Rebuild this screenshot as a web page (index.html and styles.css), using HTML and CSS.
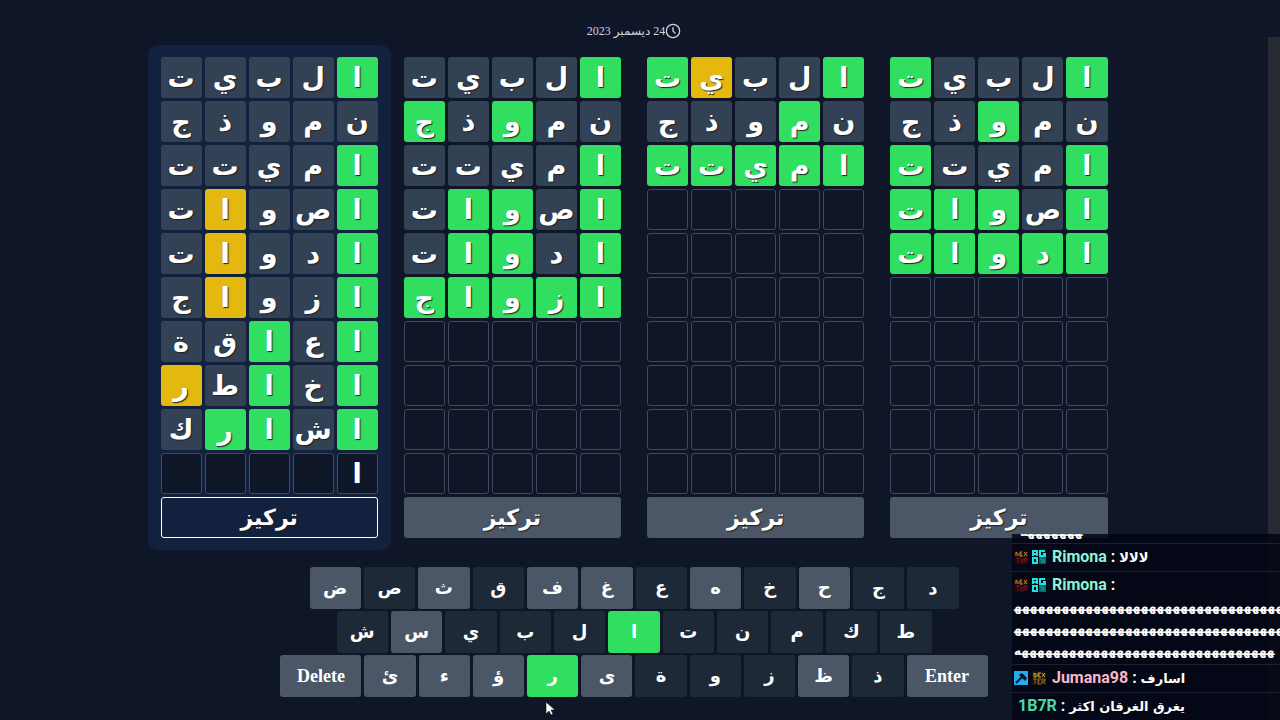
FILE: index.html
```html
<!DOCTYPE html>
<html lang="ar">
<head>
<meta charset="utf-8">
<meta name="viewport" content="width=device-width, initial-scale=1">
<title>24 ديسمبر 2023</title>
<link rel="stylesheet" href="styles.css">
</head>
<body>
<main class="game">
  <header class="date" dir="rtl">
    <svg class="clock" viewBox="0 0 24 24" fill="none" stroke="currentColor" stroke-width="2" stroke-linecap="round" stroke-linejoin="round" aria-hidden="true"><path d="M12 7v5l3 3M22 12a10 10 0 1 1-20 0 10 10 0 0 1 20 0z"/></svg>
    <time datetime="2023-12-24">24 ديسمبر 2023</time>
  </header>
  <section class="boards" id="boards"></section>
  <section class="keyboard" id="keyboard" dir="rtl"></section>
</main>
<div class="scrollbar"></div>
<aside class="chat">
  <p class="message clipped"><span class="laugh" dir="rtl">&zwj;هههههههه</span></p>
  <p class="message">
    <svg class="badge" viewBox="0 0 14 14" aria-hidden="true"><path fill="#160a10" d="M0 0h14v14H0z"/><path d="M2 6V2l2 2v2M6 2h2M6 2v4h3M6 4h2M10 2l3 4M13 2l-3 4" stroke="#c88a2c" fill="none"/><path d="M2 8h4M4 8v5M7 8v5h2M7 10h2M10 13V8h3v3h-2" stroke="#7c1418" fill="none"/></svg>
    <svg class="badge" viewBox="0 0 14 14" aria-hidden="true"><path fill="#066" d="M7 7h7v7H7z"/><path d="M1 6V1h4v5M1 4h4M13 1H8v5h5V4h-2M1 8h4v5H1z" stroke="#1be5e0" stroke-width="2" fill="none"/><path d="M8 9h2v4M12 9v4" stroke="#18a3a8" fill="none"/></svg>
    <b class="name mint">Rimona</b> <b>:</b> <span class="text" dir="rtl">لالالا</span>
  </p>
  <p class="message">
    <svg class="badge" viewBox="0 0 14 14" aria-hidden="true"><path fill="#160a10" d="M0 0h14v14H0z"/><path d="M2 6V2l2 2v2M6 2h2M6 2v4h3M6 4h2M10 2l3 4M13 2l-3 4" stroke="#c88a2c" fill="none"/><path d="M2 8h4M4 8v5M7 8v5h2M7 10h2M10 13V8h3v3h-2" stroke="#7c1418" fill="none"/></svg>
    <svg class="badge" viewBox="0 0 14 14" aria-hidden="true"><path fill="#066" d="M7 7h7v7H7z"/><path d="M1 6V1h4v5M1 4h4M13 1H8v5h5V4h-2M1 8h4v5H1z" stroke="#1be5e0" stroke-width="2" fill="none"/><path d="M8 9h2v4M12 9v4" stroke="#18a3a8" fill="none"/></svg>
    <b class="name mint">Rimona</b> <b>:</b>
    <span class="laugh" dir="rtl">هههههههههههههههههههههههههههههههههههههه&zwj;</span>
    <span class="laugh" dir="rtl">&zwj;هههههههههههههههههههههههههههههههههههههه&zwj;</span>
    <span class="laugh" dir="rtl">&zwj;ههههههههههههههههههههههههههههههههه</span>
  </p>
  <p class="message">
    <svg class="badge" viewBox="0 0 14 14" aria-hidden="true"><path fill="#20aef0" d="M0 0h14v14H0z"/><path d="M2 12l6-6" stroke="#0a1420" stroke-width="2"/><path fill="#0a1420" d="M5 4l3-2 5 5-2 3z"/></svg>
    <svg class="badge" viewBox="0 0 14 14" aria-hidden="true"><path fill="#14100c" d="M0 0h14v14H0z"/><path d="M2 2v4h2V3L2 2M9 2H6v4h3M6 4h2M10 2l3 4M13 2l-3 4" stroke="#d6b53c" fill="none"/><path d="M1 8h4M3 8v5M9 8H6v5h3M6 10h2M10 13V8h3v2h-2l2 3" stroke="#a66a28" fill="none"/></svg>
    <b class="name pink">Jumana98</b> <b>:</b> <span class="text" dir="rtl">اسارف</span>
  </p>
  <p class="message plain"><b class="name green">1B7R</b> <b>:</b> <span class="text" dir="rtl">يغرق الغرقان اكثر</span></p>
</aside>
<svg class="cursor" viewBox="0 0 12 18" aria-hidden="true"><path d="M1 1v12l3-3 2 4 2-1-2-4h4z" fill="#fff" stroke="#111" stroke-width=".6"/></svg>
<script src="app.js"></script>
</body>
</html>
```
FILE: styles.css
```css
* { box-sizing: border-box; }
body {
  margin: 0;
  min-height: 100vh;
  background: #0f1628;
  color: #fff;
  font-family: "Liberation Serif", "DejaVu Sans", serif;
  overflow: hidden;
}
.game {
  display: flex;
  flex-direction: column;
  align-items: center;
  margin-right: 12px;
  padding-top: 22px;
}
.date {
  display: flex;
  align-items: center;
  height: 18px;
  margin-bottom: 5px;
  color: #cbd5e1;
  font-size: 12px;
  line-height: 18px;
}
.clock { width: 16px; height: 16px; }
.boards {
  display: grid;
  grid-template-columns: repeat(4, 1fr);
  width: 100%;
  max-width: 973px;
}
.board {
  display: flex;
  flex-direction: column;
  gap: 3px;
  padding: 12px 13px;
  border-radius: 10px;
}
.board.active { background: #12213d; }
.row {
  display: grid;
  grid-template-columns: repeat(5, 1fr);
  gap: 3px;
}
.cell {
  display: flex;
  align-items: center;
  justify-content: center;
  height: 41px;
  border-radius: 3px;
  background: #334155;
  font: bold 27px/41px "DejaVu Sans", sans-serif;
  text-shadow: 1px 1px 1px #222;
}
.cell.empty { background: #0f1628; border: 1px solid #3f4b5c; }
.hit { background: #30df60; }
.near { background: #e4b80e; }
.focus {
  height: 41px;
  padding: 0;
  border: 0;
  border-radius: 3px;
  background: #4b5666;
  color: #fff;
  font: bold 22px/38px "DejaVu Sans", sans-serif;
  text-shadow: 1px 1px 1px #222;
}
.active .focus { background: transparent; border: 1px solid #fff; }
.keyboard {
  display: flex;
  flex-direction: column;
  gap: 2px;
  width: 100%;
  max-width: 707px;
  margin-top: 17px;
}
.keys { display: flex; gap: 3px; }
.keys.first { padding: 0 29px; }
.keys.second { padding: 0 56px; }
.key {
  flex: 1;
  height: 42px;
  padding: 0;
  border: 0;
  border-radius: 3px;
  background: #1e2938;
  color: #fff;
  font: bold 18px/40px "Liberation Serif", "DejaVu Sans", serif;
}
.key.wide { flex: 0 0 81px; }
.key.idle { background: #4b5666; }
.key.hit { background: #30df60; }
.scrollbar {
  position: absolute;
  top: 37px;
  right: 0;
  bottom: 0;
  width: 12px;
  background: #292b34;
}
.chat {
  position: absolute;
  right: 0;
  bottom: 0;
  width: 268px;
  background: rgba(2, 5, 18, .85);
  font: 16px/22px Roboto, "DejaVu Sans", sans-serif;
}
.message {
  margin: 0;
  padding: 2px 2px;
  border-bottom: 1px solid #1b2130;
}
.message:last-child { border-bottom: 0; }
.clipped { display: flex; align-items: flex-end; height: 10px; padding: 0 8px; overflow: hidden; }
.plain { padding-left: 6px; }
.badge { width: 14px; height: 14px; vertical-align: -2px; }
.name { margin-left: 2px; }
.plain .name { margin-left: 0; }
.mint { color: #8af5d5; }
.pink { color: #f5b8cc; }
.green { color: #4bd8a4; }
.text { font: bold 13px/22px "DejaVu Sans", sans-serif; }
.laugh { display: block; width: max-content; font: bold 12px/22px "DejaVu Sans", sans-serif; }
.cursor {
  position: absolute;
  left: 545px;
  top: 701px;
  width: 12px;
  height: 18px;
}
```
FILE: app.js
```javascript
// Marks: g = right place, y = wrong place, - = absent, . = typed but not submitted
const boards = [
  { active: true, rows: [["البيت", "g----"], ["نموذج", "-----"], ["اميتت", "g----"], ["اصوات", "g--y-"], ["ادوات", "g--y-"], ["ازواج", "g--y-"], ["اعاقة", "g-g--"], ["اخاطر", "g-g-y"], ["اشارك", "g-gg-"], ["ا", "."]] },
  { rows: [["البيت", "g----"], ["نموذج", "--g-g"], ["اميتت", "g----"], ["اصوات", "g-gg-"], ["ادوات", "g-gg-"], ["ازواج", "ggggg"]] },
  { rows: [["البيت", "g--yg"], ["نموذج", "-g---"], ["اميتت", "ggggg"]] },
  { rows: [["البيت", "g---g"], ["نموذج", "--g--"], ["اميتت", "g---g"], ["اصوات", "g-ggg"], ["ادوات", "ggggg"]] }
];
const markClass = { g: "hit", y: "near", "-": "miss", ".": "empty" };

function add(parent, tag, className, text = "") {
  const node = document.createElement(tag);
  node.className = className;
  node.textContent = text;
  parent.append(node);
  return node;
}

for (const data of boards) {
  const board = add(document.getElementById("boards"), "div", data.active ? "board active" : "board");
  board.dir = "rtl";
  for (let r = 0; r < 10; r++) {
    const [word, marks] = data.rows[r] || ["", ""];
    const row = add(board, "div", "row");
    for (let c = 0; c < 5; c++) add(row, "div", "cell " + (markClass[marks[c]] || "empty"), word[c] || "");
  }
  add(board, "button", "focus", "تركيز");
}

const idle = "حهغفثضسظىؤءئ";
const layout = [["first", [..."دجحخهعغفقثصض"]], ["second", [..."طكمنتالبيسش"]], ["third", ["Enter", ..."ذظزوةىرؤءئ", "Delete"]]];
for (const [name, keys] of layout) {
  const row = add(document.getElementById("keyboard"), "div", "keys " + name);
  for (const key of keys) {
    const state = key.length > 1 ? "wide idle" : "ار".includes(key) ? "hit" : idle.includes(key) ? "idle" : "";
    add(row, "button", ("key " + state).trim(), key);
  }
}
```
